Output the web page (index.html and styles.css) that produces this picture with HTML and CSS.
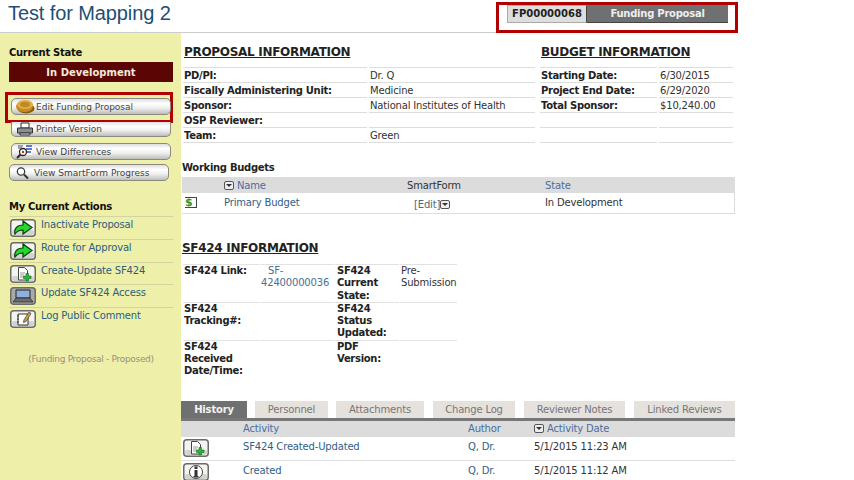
FILE: index.html
```html
<!DOCTYPE html>
<html lang="en">
<head>
  <meta charset="UTF-8" />
  <title>Test for Mapping 2</title>
  <link rel="stylesheet" href="styles.css">
</head>
<body>

<svg class="defs" width="0" height="0">
  <symbol id="ico-frame" viewBox="0 0 26 18">
    <rect x="0.75" y="0.75" width="24.5" height="16.5" rx="3" fill="#f3f3f0" stroke="#6b6b68" stroke-width="1.5"/>
    <rect x="2" y="11" width="22" height="5" rx="2" fill="#d2d2ce"/>
  </symbol>
  <symbol id="ico-arrow" viewBox="0 0 26 18">
    <use href="#ico-frame"/>
    <path d="M5 15c-1.200-5 1.800-9 8-9V2l9 6.500-9 6.500v-4c-3.500 0-6 1-8 4z" fill="#22d92c" stroke="#0b3d10" stroke-width="1.200"/>
  </symbol>
  <symbol id="ico-doc" viewBox="0 0 26 18">
    <use href="#ico-frame"/>
    <path d="M8.500 2.500h6l3 3v9.500h-9z" fill="#fff" stroke="#444"/>
    <path d="M10 8h5M10 10h4M10 12h3" stroke="#999"/>
    <path d="M16 8.500h2.500V11H21v2.500h-2.500V16H16v-2.500h-2.500V11H16z" fill="#2bb53a" stroke="#0f6b1c" stroke-width=".6"/>
  </symbol>
</svg>

<header class="top">
  <h1 class="title">Test for Mapping 2</h1>
  <div class="ident">
    <span class="ident-id">FP00000068</span>
    <span class="ident-type">Funding Proposal</span>
  </div>
</header>

<div class="layout">
  <aside class="side">
    <h3 class="side-head">Current State</h3>
    <div class="state">In Development</div>

    <div class="callout">
      <a class="btn">
        <svg class="btn-ico" width="20" height="15" viewBox="0 0 20 15">
          <ellipse cx="11" cy="9.500" rx="8.500" ry="5" fill="#8a5c10"/>
          <ellipse cx="9.500" cy="7.500" rx="8.500" ry="5.500" fill="#c48d24"/>
          <ellipse cx="10" cy="5.500" rx="8" ry="4.500" fill="#e2ae45"/>
          <ellipse cx="10" cy="5.500" rx="5" ry="2.700" fill="#c08a22"/>
        </svg>
        Edit Funding Proposal
      </a>
    </div>
    <a class="btn btn-print">
      <svg class="btn-ico" width="20" height="14" viewBox="0 0 20 14">
        <path d="M6 1h8v5H6z" fill="#fff" stroke="#333"/>
        <path d="M2.500 6h15v5h-15z" fill="#8a8f96" stroke="#333"/>
        <path d="M5 11h10v2H5z" fill="#ddd" stroke="#333"/>
      </svg>
      Printer Version
    </a>
    <a class="btn btn-diff">
      <svg class="btn-ico" width="20" height="15" viewBox="0 0 20 15">
        <path d="M4 1h13v10H4z" fill="#fff"/>
        <path d="M11 2h6M11 5h6M11 8h5" stroke="#2b4fc0" stroke-width="1.500"/>
        <path d="M3 2h5M3 4h4" stroke="#444"/>
        <circle cx="8" cy="8" r="3.500" fill="#fff" stroke="#222" stroke-width="1.300"/>
        <circle cx="8" cy="8" r="1.200" fill="#d22"/>
        <path d="M5.500 10.500L2 14" stroke="#222" stroke-width="1.800"/>
      </svg>
      View Differences
    </a>
    <a class="btn btn-smart">
      <svg class="btn-ico" width="20" height="14" viewBox="0 0 20 14">
        <circle cx="8" cy="5.500" r="3.700" fill="#fff" stroke="#333" stroke-width="1.200"/>
        <path d="M11 8.500l4 4" stroke="#333" stroke-width="2"/>
      </svg>
      View SmartForm Progress
    </a>

    <h3 class="side-head actions-head">My Current Actions</h3>
    <ul class="actions">
      <li><svg class="act-ico"><use href="#ico-arrow"/></svg><a>Inactivate Proposal</a></li>
      <li><svg class="act-ico"><use href="#ico-arrow"/></svg><a>Route for Approval</a></li>
      <li><svg class="act-ico"><use href="#ico-doc"/></svg><a>Create-Update SF424</a></li>
      <li>
        <svg class="act-ico" viewBox="0 0 26 18">
          <rect x="0.750" y="0.750" width="24.500" height="16.500" rx="3" fill="#a9a9a6" stroke="#6b6b68" stroke-width="1.500"/>
          <path d="M6 3h14v8H6z" fill="#8fb0dc" stroke="#222"/>
          <path d="M6 11h14l3 4H3z" fill="#6a6d70" stroke="#222" stroke-width=".7"/>
        </svg>
        <a>Update SF424 Access</a>
      </li>
      <li>
        <svg class="act-ico" viewBox="0 0 26 18">
          <use href="#ico-frame"/>
          <path d="M8 4h10v11H8z" fill="#fff" stroke="#333"/>
          <path d="M7 6h2M7 9h2M7 12h2" stroke="#333"/>
          <path d="M19 2l2 1.500-5 8-2.500 1 .5-2.700z" fill="#d8a23a" stroke="#333" stroke-width=".7"/>
        </svg>
        <a>Log Public Comment</a>
      </li>
    </ul>
    <p class="side-note">(Funding Proposal - Proposed)</p>
  </aside>

  <main class="content">
    <div class="info-row">
      <section class="info-proposal">
        <h2 class="sec-head">PROPOSAL INFORMATION</h2>
        <table class="info">
          <tr><th>PD/PI:</th><td>Dr. Q</td></tr>
          <tr><th>Fiscally Administering Unit:</th><td>Medicine</td></tr>
          <tr><th>Sponsor:</th><td>National Institutes of Health</td></tr>
          <tr><th>OSP Reviewer:</th><td></td></tr>
          <tr><th>Team:</th><td>Green</td></tr>
        </table>
      </section>
      <section class="info-budget">
        <h2 class="sec-head">BUDGET INFORMATION</h2>
        <table class="info">
          <tr><th>Starting Date:</th><td>6/30/2015</td></tr>
          <tr><th>Project End Date:</th><td>6/29/2020</td></tr>
          <tr><th>Total Sponsor:</th><td>$10,240.00</td></tr>
          <tr><th></th><td></td></tr>
          <tr><th></th><td></td></tr>
        </table>
      </section>
    </div>

    <h4 class="sub-head">Working Budgets</h4>
    <table class="list budgets">
      <tr class="list-head">
        <th class="col-icon"></th>
        <th class="col-name"><span class="sort"></span> <a>Name</a></th>
        <th class="col-form">SmartForm</th>
        <th><a>State</a></th>
      </tr>
      <tr>
        <td class="col-icon"><span class="money">$</span></td>
        <td class="col-name"><a>Primary Budget</a></td>
        <td class="col-form edit-cell">[Edit]<span class="sort"></span></td>
        <td>In Development</td>
      </tr>
    </table>

    <h2 class="sec-head sf-head">SF424 INFORMATION</h2>
    <table class="sf">
      <tr>
        <th>SF424 Link:</th>
        <td class="sf-link"><a>SF-<br>42400000036</a></td>
        <th>SF424 Current State:</th>
        <td>Pre-Submission</td>
      </tr>
      <tr>
        <th>SF424 Tracking#:</th><td></td>
        <th>SF424 Status Updated:</th><td></td>
      </tr>
      <tr>
        <th>SF424 Received Date/Time:</th><td></td>
        <th>PDF Version:</th><td></td>
      </tr>
    </table>

    <nav class="tabs">
      <a class="tab tab-on">History</a>
      <a class="tab tab-personnel">Personnel</a>
      <a class="tab tab-attach">Attachments</a>
      <a class="tab tab-log">Change Log</a>
      <a class="tab tab-notes">Reviewer Notes</a>
      <a class="tab tab-linked">Linked Reviews</a>
    </nav>
    <table class="list history">
      <tr class="list-head">
        <th class="h-icon"></th>
        <th class="h-activity"><a>Activity</a></th>
        <th class="h-author"><a>Author</a></th>
        <th><span class="sort"></span> <a>Activity Date</a></th>
      </tr>
      <tr>
        <td class="h-icon"><svg class="act-ico"><use href="#ico-doc"/></svg></td>
        <td class="h-activity"><a>SF424 Created-Updated</a></td>
        <td class="h-author"><a>Q, Dr.</a></td>
        <td>5/1/2015 11:23 AM</td>
      </tr>
      <tr>
        <td class="h-icon">
          <svg class="act-ico" viewBox="0 0 26 18">
            <use href="#ico-frame"/>
            <circle cx="13" cy="9" r="6.500" fill="#fff" stroke="#444"/>
            <path d="M11.500 3.500h3v2.500h-3zM11.500 7h3v6h1v1.500h-5V13h1z" fill="#333"/>
          </svg>
        </td>
        <td class="h-activity"><a>Created</a></td>
        <td class="h-author"><a>Q, Dr.</a></td>
        <td>5/1/2015 11:12 AM</td>
      </tr>
    </table>
  </main>
</div>

</body>
</html>
```

FILE: styles.css
```css
html, body {
  height: 480px;
  overflow: hidden;
}
body {
  margin: 0;
  font-family: "DejaVu Sans", Verdana, sans-serif;
  font-size: 10px;
  letter-spacing: -.17px;
  color: #333;
  background: white;
}
a {
  color: #2a6080;
}
th, h2, h3, h4 {
  letter-spacing: -.3px;
}
.defs {
  position: absolute;
}

/* top bar */
.top {
  box-sizing: border-box;
  width: 738px;
  height: 33px;
  border-bottom: 1px solid #ccc;
  display: flex;
  justify-content: space-between;
  align-items: flex-start;
}
.title {
  margin: 1px 0 0 8px;
  font-family: "Liberation Sans", Arial, sans-serif;
  font-size: 20px;
  font-weight: normal;
  line-height: 24px;
  letter-spacing: -.1px;
  color: #1d4f76;
}
.ident {
  box-sizing: border-box;
  width: 242px;
  height: 31px;
  margin-top: 2px;
  padding: 0 7px 0 8px;
  border: 3px solid #b00000;
  display: flex;
  align-items: flex-start;
  font-weight: bold;
  background: white;
}
.ident-id {
  box-sizing: border-box;
  width: 80px;
  height: 18px;
  line-height: 16px;
  letter-spacing: 0;
  text-align: center;
  color: #222;
  background: #dedede;
  border: 1px solid #aaa;
  border-right-color: #444;
}
.ident-type {
  width: 141px;
  height: 18px;
  line-height: 17px;
  letter-spacing: -.25px;
  text-align: center;
  color: #eee;
  background: #6e7072;
  border-bottom: 1px solid #444;
  box-sizing: border-box;
}

/* left column */
.layout {
  display: flex;
  width: 738px;
}
.side {
  box-sizing: border-box;
  width: 181px;
  height: 447px;
  flex: none;
  padding: 13px 8px 0 9px;
  background: #eeefa9;
}
.side-head {
  margin: 0;
  font-size: 10px;
  line-height: 13px;
  color: #111;
}
.state {
  width: 164px;
  height: 20px;
  margin-top: 3px;
  line-height: 21px;
  text-align: center;
  font-weight: bold;
  letter-spacing: 0;
  color: #f4e8d8;
  background: #5b0505;
}
.callout {
  box-sizing: border-box;
  width: 168px;
  height: 31px;
  margin: 10px 0 0 -4px;
  padding: 3px 0 0 3px;
  border: 3px solid #b00000;
}
.btn {
  box-sizing: border-box;
  display: flex;
  align-items: center;
  gap: 1px;
  width: 160px;
  height: 17px;
  padding-left: 3px;
  font-size: 9px;
  letter-spacing: 0;
  color: #444;
  white-space: nowrap;
  border: 1px solid #8a8a80;
  border-radius: 5px;
  background: linear-gradient(#dedede, #fff 30%, #efefef 60%, #bdbdb8);
}
.btn-ico {
  flex: none;
}
.btn-print {
  margin: -1px 0 0 2px;
  height: 15px;
  border-top: none;
  border-radius: 0 0 5px 5px;
}
.btn-diff {
  margin: 6px 0 0 2px;
}
.btn-smart {
  margin-top: 4px;
  height: 17px;
}
.actions-head {
  margin-top: 19px;
}
.actions {
  list-style: none;
  margin: 3px 0 0;
  padding: 0;
}
.actions li {
  display: flex;
  gap: 5px;
  height: 21px;
  margin-bottom: .75px;
  border-top: 1px solid #d4d4a0;
  white-space: nowrap;
}
.actions a {
  line-height: 13px;
  margin-top: 1px;
}
.act-ico {
  flex: none;
  width: 26px;
  height: 18px;
  margin: 2px 0 0 1px;
}
.side-note {
  margin: 25px 0 0;
  font-size: 9px;
  letter-spacing: -.3px;
  text-align: center;
  color: #99917c;
  white-space: nowrap;
}

/* right column */
.content {
  width: 554px;
  margin-left: 1px;
}
.info-row {
  display: flex;
}
.info-proposal {
  width: 357px;
  margin-left: 1px;
}
.info-budget {
  width: 196px;
}
.sec-head {
  margin: 12px 0 0 1px;
  font-size: 12px;
  line-height: 15px;
  color: #222;
  text-decoration: underline;
}
table {
  border-collapse: separate;
  border-spacing: 0;
}
.info {
  margin-top: 7px;
  table-layout: fixed;
  border-spacing: 2px 0;
}
.info th, .info td {
  height: 12px;
  padding: 2px 0 0 1px;
  border-top: 1px solid #ddd;
  text-align: left;
  line-height: 12px;
}
.info tr:last-child th, .info tr:last-child td {
  border-bottom: 1px solid #ddd;
}
.info th {
  color: #222;
}
.info-proposal .info {
  width: 356px;
  margin-left: -2px;
}
.info-proposal th {
  width: 183px;
}
.info-budget .info {
  width: 197px;
  margin-left: -2px;
}
.info-budget th {
  width: 116px;
}
.sub-head {
  margin: 18px 0 0;
  font-size: 10px;
  line-height: 13px;
  color: #222;
}
.list {
  width: 553px;
  table-layout: fixed;
}
.list th {
  text-align: left;
  font-weight: normal;
  letter-spacing: -.17px;
}
.list-head {
  background: #dcdcdc;
}
.list a {
  color: #2f5f86;
}
.budgets {
  margin-top: 3px;
  border-right: 1px solid #ddd;
  border-bottom: 1px solid #ddd;
}
.budgets th {
  height: 16px;
  padding: 0;
}
.budgets td {
  height: 18px;
  padding: 0 0 2px;
}
.budgets .list-head a {
  color: #4a6ea0;
}
.budgets .col-icon {
  width: 42px;
  padding-left: 3px;
  box-sizing: border-box;
}
.budgets .col-name {
  width: 183px;
}
.budgets .col-form {
  width: 138px;
}
.edit-cell {
  color: #4a6a80;
  padding: 2px 0 0 7px !important;
}
.money {
  display: inline-block;
  box-sizing: border-box;
  width: 12px;
  height: 11px;
  line-height: 10px;
  font-size: 11px;
  font-weight: bold;
  color: #1f9a3c;
  border: 1px solid #444;
  border-left: none;
  background: #fff;
}
.sort {
  display: inline-block;
  position: relative;
  box-sizing: border-box;
  width: 10px;
  height: 9px;
  vertical-align: -1px;
  border: 1px solid #555;
  border-radius: 2px;
  background: #eee;
}
.sort::after {
  content: "";
  position: absolute;
  left: 1px;
  top: 2px;
  border: 3px solid transparent;
  border-top-color: #333;
  border-bottom: none;
}
.sf-head {
  margin: 27px 0 0;
}
.sf {
  margin: 8px 0 0;
  width: 276px;
  table-layout: fixed;
  border-spacing: 1px 0;
}
.sf th, .sf td {
  box-sizing: content-box;
  vertical-align: top;
  text-align: left;
  padding: 0 0 0 1px;
  height: 36px;
  line-height: 12.300px;
  border-top: 1px solid #e2e2e2;
}
.sf th {
  color: #222;
}
.sf th:nth-child(1) {
  width: 75px;
}
.sf td:nth-child(2) {
  width: 73px;
}
.sf th:nth-child(3) {
  width: 62px;
  padding-left: 2px;
}
.sf-link {
  white-space: nowrap;
}
.sf-link a {
  color: #4a7093;
}
.sf-link::first-line {
  word-spacing: 0;
}
.sf-link a::before {
  content: "";
  display: inline-block;
  width: 7px;
}
.tabs {
  display: flex;
  margin: 23px 0 0 -1px;
  height: 17px;
  width: 554px;
  border-bottom: 3px solid #777;
}
.tab {
  box-sizing: border-box;
  height: 17px;
  line-height: 18px;
  text-align: center;
  color: #777;
  background: #e5e1dd;
}
.tab-on {
  width: 66px;
  font-weight: bold;
  color: #f2f2f2;
  background: #6e7072;
  margin-right: 8px;
}
.tab-personnel {
  width: 73px;
  margin-right: 8px;
}
.tab-attach {
  width: 88px;
  margin-right: 9px;
}
.tab-log {
  width: 82px;
  margin-right: 9px;
}
.tab-notes {
  width: 101px;
  margin-right: 9px;
}
.tab-linked {
  width: 101px;
}
.history {
  width: 554px;
  margin-left: -1px;
}
.history th {
  height: 16px;
  padding: 0;
}
.history td {
  height: 23px;
  padding: 0;
  vertical-align: top;
  line-height: 19px;
  border-bottom: 1px solid #ddd;
}
.history .h-icon {
  width: 62px;
}
.history .h-icon svg {
  margin: 2px 0 0 2px;
  display: block;
}
.history .h-activity {
  width: 225px;
}
.history .h-author {
  width: 66px;
}
.history .list-head a {
  color: #4a6ea0;
}
```
